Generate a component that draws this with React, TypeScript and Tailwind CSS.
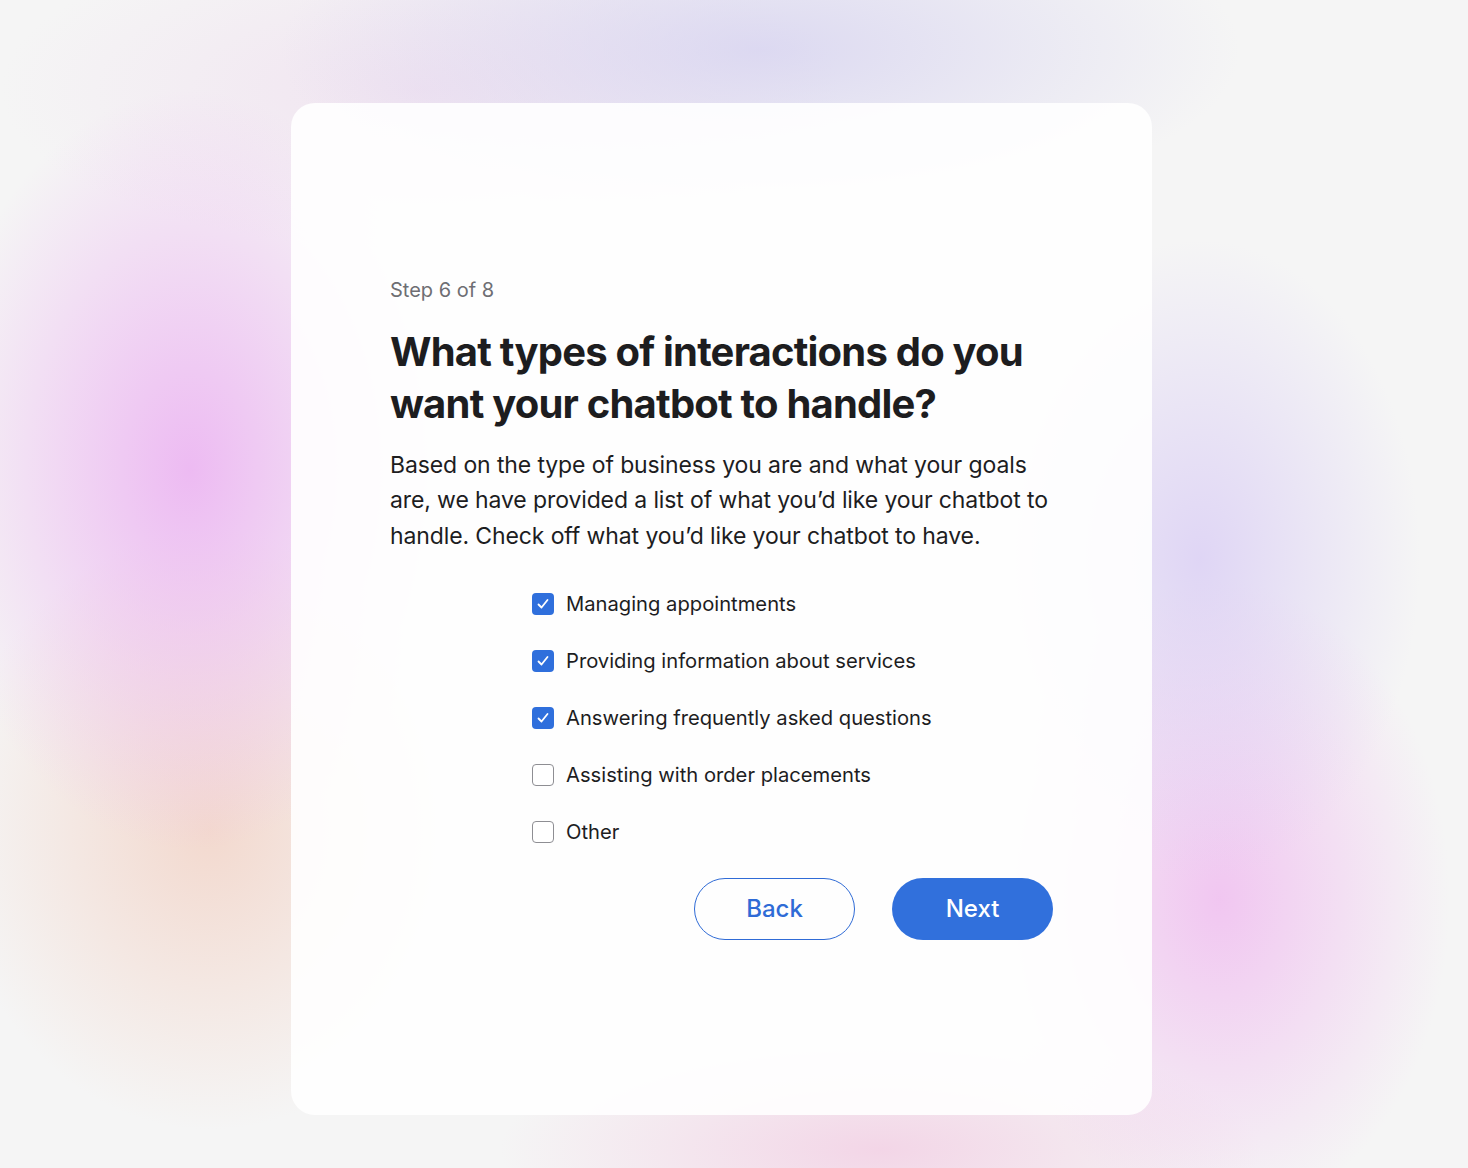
import { useState } from "react";

const options = [
  "Managing appointments",
  "Providing information about services",
  "Answering frequently asked questions",
  "Assisting with order placements",
  "Other",
];

export default function App() {
  const [checked, setChecked] = useState<boolean[]>([true, true, true, false, false]);

  const toggle = (i: number) => {
    setChecked(checked.map((c, idx) => (idx === i ? !c : c)));
  };

  return (
    <div className="min-h-[1168px] w-full bg-[#f5f5f5] bg-[radial-gradient(ellipse_260px_380px_at_190px_470px,rgba(236,180,242,0.9),transparent),radial-gradient(ellipse_260px_300px_at_210px_830px,rgba(242,205,190,0.7),transparent),radial-gradient(ellipse_480px_170px_at_760px_50px,rgba(212,208,240,0.75),transparent),radial-gradient(ellipse_420px_160px_at_420px_90px,rgba(236,210,236,0.5),transparent),radial-gradient(ellipse_220px_320px_at_1200px_560px,rgba(214,200,245,0.7),transparent),radial-gradient(ellipse_230px_320px_at_1220px_900px,rgba(240,190,240,0.85),transparent),radial-gradient(ellipse_380px_120px_at_880px_1150px,rgba(242,200,225,0.7),transparent)] pt-[103px] font-['Inter',sans-serif]">
      <div className="ml-[291px] flex h-[1012px] w-[861px] flex-col justify-center rounded-[24px] bg-white/90 px-[99px]">
        <p className="text-[20px] leading-[24px] text-[#6e6e73]">Step 6 of 8</p>
        <h1 className="mt-[24px] text-[40px] font-bold leading-[52px] tracking-[-0.02em] text-[#1d1d1f]">
          What types of interactions do you want your chatbot to handle?
        </h1>
        <p className="mt-[18px] text-[23px] leading-[35.5px] tracking-[-0.005em] text-[#1d1d1f]">
          Based on the type of business you are and what your goals are, we have provided a list of what you’d like your chatbot to handle. Check off what you’d like your chatbot to have.
        </p>
        <div className="mt-[37px] flex flex-col gap-[31px] pl-[142px]">
          {options.map((opt, i) => (
            <label key={opt} className="flex cursor-pointer items-center gap-[12px]" onClick={() => toggle(i)}>
              <span
                className={
                  checked[i]
                    ? "flex h-[22px] w-[22px] items-center justify-center rounded-[4px] bg-[#2f6fdc]"
                    : "flex h-[22px] w-[22px] items-center justify-center rounded-[4px] border border-[#8e8e93] bg-white"
                }
              >
                {checked[i] && (
                  <svg width="14" height="14" viewBox="0 0 14 14" fill="none">
                    <path d="M2.5 7.5 L5.5 10.5 L11.5 3" stroke="white" strokeWidth="1.8" strokeLinecap="round" strokeLinejoin="round" />
                  </svg>
                )}
              </span>
              <span className="text-[20.2px] leading-[26px] text-[#1d1d1f]">{opt}</span>
            </label>
          ))}
        </div>
        <div className="mt-[33px] flex justify-end gap-[37px]">
          <button className="h-[62px] w-[161px] rounded-full border-[1.5px] border-[#2f6bd6] text-[24px] font-medium text-[#2f6bd6]">
            Back
          </button>
          <button className="h-[62px] w-[161px] rounded-full bg-[#3170dc] text-[24px] font-medium text-white">
            Next
          </button>
        </div>
      </div>
    </div>
  );
}
